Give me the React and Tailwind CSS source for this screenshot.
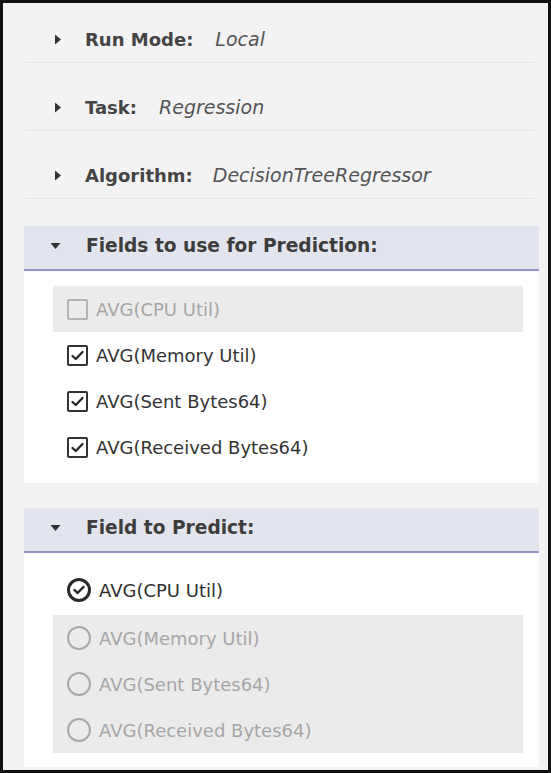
import React from "react";

// Small solid triangles used as expand/collapse markers
const CaretRight = () => (
    <svg width="8" height="11" viewBox="0 0 8 11" className="shrink-0">
        <path d="M1 0.5 L7 5.5 L1 10.5 Z" fill="#333" />
    </svg>
);

const CaretDown = () => (
    <svg width="11" height="8" viewBox="0 0 11 8" className="shrink-0">
        <path d="M0.5 1 L10.5 1 L5.5 7 Z" fill="#333" />
    </svg>
);

// Checkbox drawn as a bordered square with an optional tick
const CheckBox = ({ checked, disabled }) => (
    <span
        className={
            "flex h-[21px] w-[21px] shrink-0 items-center justify-center rounded-[2px] border-2 " +
            (disabled ? "border-[#b4b4b4]" : "border-[#333] bg-white")
        }
    >
        {checked ? (
            <svg width="13" height="11" viewBox="0 0 13 11">
                <path d="M1.5 6 L4.8 9 L11.5 2" fill="none" stroke="#222" strokeWidth="2.2" strokeLinecap="round" strokeLinejoin="round" />
            </svg>
        ) : null}
    </span>
);

// Radio drawn as a circle, the selected one carries a tick
const Radio = ({ checked }) => (
    <span
        className={
            "flex h-[24px] w-[24px] shrink-0 items-center justify-center rounded-full " +
            (checked ? "border-[3px] border-[#2a2a2a]" : "border-2 border-[#a8a8a8]")
        }
    >
        {checked ? (
            <svg width="12" height="10" viewBox="0 0 12 10">
                <path d="M1.5 5 L4.5 8 L10.5 2" fill="none" stroke="#222" strokeWidth="2.4" strokeLinecap="round" strokeLinejoin="round" />
            </svg>
        ) : null}
    </span>
);

const SettingRow = ({ label, value, first }) => (
    <div
        className={
            "ml-[23px] mr-[14px] flex h-[46px] items-center border-b border-[#e6e6e6] pl-[28px] " +
            (first ? "mt-[14px]" : "mt-[22px]")
        }
    >
        <CaretRight />
        <span className="ml-[23px] text-[18px] font-bold text-[#444]">{label}</span>
        <span className="italic text-[19px] text-[#555]" style={{ marginLeft: value.gap }}>{value.text}</span>
    </div>
);

const SectionHeader = ({ title, top }) => (
    <div className={"ml-[21px] mr-[9px] flex h-[45px] items-center border-b-2 border-[#9296c6] bg-[#e3e5ee] pb-[3px] pl-[26px] " + top}>
        <CaretDown />
        <span className="ml-[25px] text-[18.6px] font-bold text-[#3d3d3d]">{title}</span>
    </div>
);

const fields = ["AVG(CPU Util)", "AVG(Memory Util)", "AVG(Sent Bytes64)", "AVG(Received Bytes64)"];

export default function App() {
    return (
        <div
            className="flex h-[773px] w-[551px] flex-col border-[3px] border-[#111] bg-[#f3f3f3]"
            style={{ fontFamily: '"DejaVu Sans", Verdana, sans-serif' }}
        >
            {/* Collapsed settings */}
            <SettingRow first label="Run Mode:" value={{ text: "Local", gap: "22px" }} />
            <SettingRow label="Task:" value={{ text: "Regression", gap: "22px" }} />
            <SettingRow label="Algorithm:" value={{ text: "DecisionTreeRegressor", gap: "20px" }} />

            {/* Fields to use */}
            <SectionHeader title="Fields to use for Prediction:" top="mt-[27px]" />
            <div className="ml-[21px] mr-[9px] bg-white pb-[13px] pt-[15px]">
                {fields.map((f, i) => (
                    <div
                        key={f}
                        className={
                            "ml-[29px] mr-[16px] flex h-[46px] items-center gap-[8px] pl-[14px] text-[18px] " +
                            (i === 0 ? "bg-[#ebebeb] text-[#a6a6a6]" : "text-[#333]")
                        }
                    >
                        <CheckBox checked={i !== 0} disabled={i === 0} />
                        <span>{f}</span>
                    </div>
                ))}
            </div>

            {/* Field to predict */}
            <SectionHeader title="Field to Predict:" top="mt-[25px]" />
            <div className="ml-[21px] mr-[9px] bg-white pb-[14px] pt-[14px]">
                <div className="ml-[29px] mr-[16px] flex h-[46px] items-center gap-[8px] pl-[14px] text-[18px] text-[#2f2f2f]">
                    <Radio checked />
                    <span>{fields[0]}</span>
                </div>
                <div className="ml-[29px] mr-[16px] mt-[2px] bg-[#ebebeb]">
                    {fields.slice(1).map((f) => (
                        <div key={f} className="flex h-[46px] items-center gap-[8px] pl-[14px] text-[18px] text-[#a6a6a6]">
                            <Radio />
                            <span>{f}</span>
                        </div>
                    ))}
                </div>
            </div>
        </div>
    );
}
